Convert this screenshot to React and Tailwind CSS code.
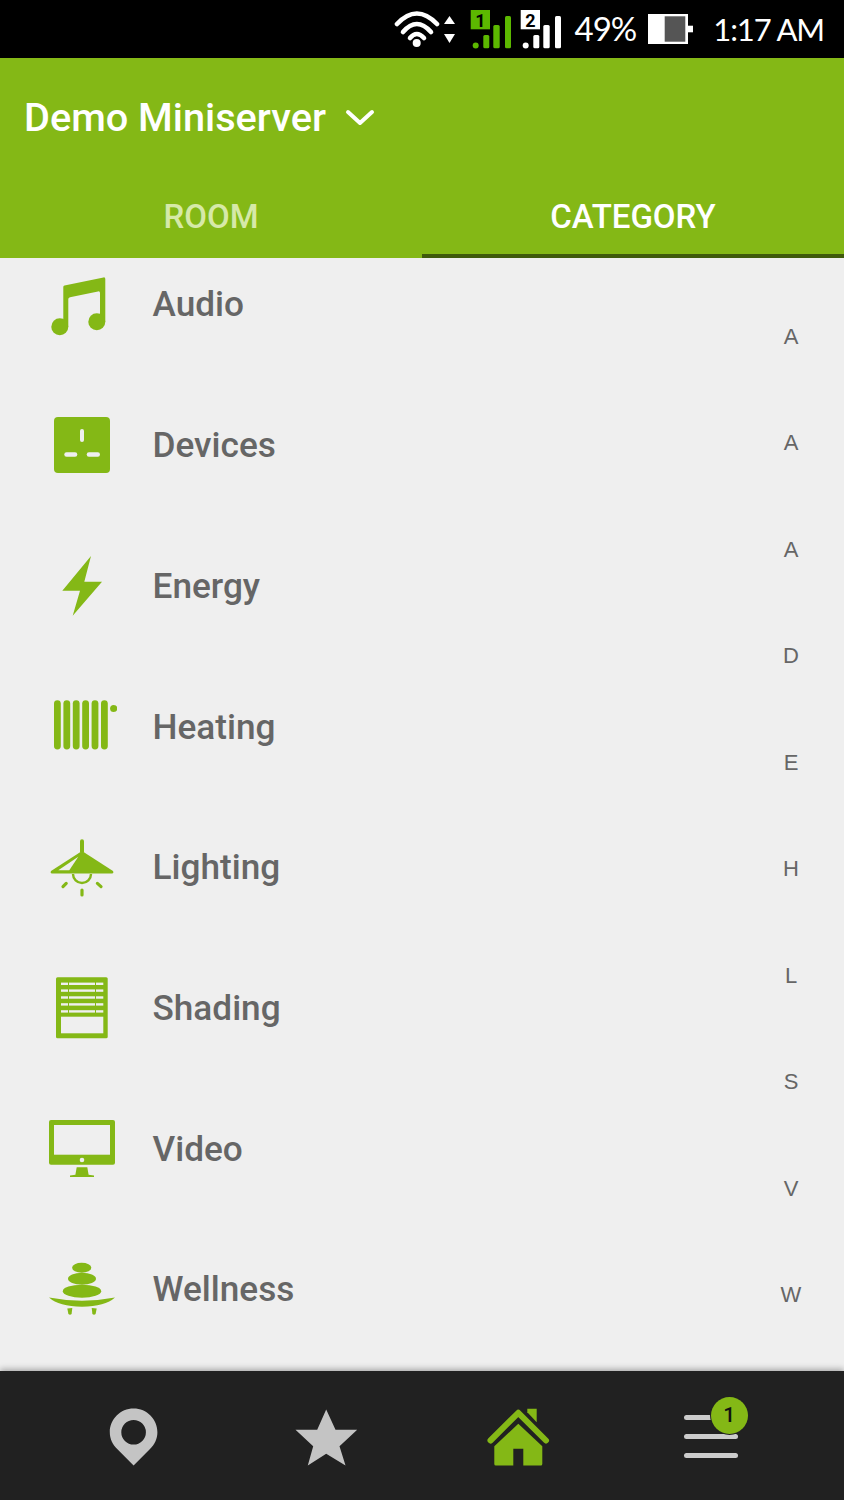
const categories = [
  { name: "Audio", icon: AudioIcon },
  { name: "Devices", icon: DevicesIcon },
  { name: "Energy", icon: EnergyIcon },
  { name: "Heating", icon: HeatingIcon },
  { name: "Lighting", icon: LightingIcon },
  { name: "Shading", icon: ShadingIcon },
  { name: "Video", icon: VideoIcon },
  { name: "Wellness", icon: WellnessIcon },
];

const letters = ["A", "A", "A", "D", "E", "H", "L", "S", "V", "W"];

function Icon({ children }) {
  return (
    <svg width="70" height="70" viewBox="0 0 70 70" fill="#84b816" className="shrink-0">
      {children}
    </svg>
  );
}

function AudioIcon() {
  return (
    <Icon>
      <path d="M16.3 18 Q16.3 16.8 17.5 16.5 L56.5 8.4 Q58.3 8.1 58.3 10 V52.7 H53 V24 Q53 22 51 22.4 L23 28.2 Q21.3 28.6 21.3 30 V57.7 H16.3 Z" />
      <circle cx="12.8" cy="57.7" r="8.5" />
      <circle cx="49.8" cy="52.7" r="8.5" />
    </Icon>
  );
}

function DevicesIcon() {
  return (
    <Icon>
      <rect x="7" y="7" width="56" height="56" rx="4" />
      <rect x="33" y="19" width="4" height="13" rx="2" fill="#efefef" />
      <rect x="17.3" y="42.3" width="13" height="4.4" rx="2.2" fill="#efefef" />
      <rect x="39.7" y="42.3" width="13.3" height="4.4" rx="2.2" fill="#efefef" />
    </Icon>
  );
}

function EnergyIcon() {
  return (
    <Icon>
      <polygon points="44,5 15.3,39.7 33,39.7 25.7,64.7 55,30.7 37.3,30.7" />
    </Icon>
  );
}

function HeatingIcon() {
  return (
    <Icon>
      {[7, 16.4, 25.8, 35.2, 44.6, 54].map((x) => (
        <rect key={x} x={x} y="9.2" width="6.8" height="49.3" rx="3.4" />
      ))}
      <circle cx="66.7" cy="17.5" r="3.6" />
    </Icon>
  );
}

function LightingIcon() {
  return (
    <Icon>
      <rect x="33" y="7.3" width="4" height="14" rx="2" />
      <path d="M35 19 L66 39 Q67 41.5 65 41.5 H5 Q3 41.5 4 39 Z" />
      <polygon points="31.3,24.7 11.3,38.3 22.3,38.3" fill="#efefef" />
      <path d="M26 42 A9 9 0 0 0 44 42" fill="none" stroke="#84b816" strokeWidth="2.4" />
      <g stroke="#84b816" strokeWidth="3.2" strokeLinecap="round">
        <line x1="35" y1="58" x2="35" y2="63" />
        <line x1="16" y1="54.6" x2="19.2" y2="51.4" />
        <line x1="54" y1="54.6" x2="50.4" y2="51.4" />
      </g>
    </Icon>
  );
}

function ShadingIcon() {
  return (
    <Icon>
      <rect x="9" y="4.3" width="51.7" height="61" rx="1.5" />
      <rect x="14" y="43.7" width="42.3" height="16.6" fill="#efefef" />
      {[9.6, 16.4, 23.3, 30.2, 37.2].map((y) => (
        <g key={y} fill="#efefef">
          <rect x="14" y={y} width="7" height="2.4" />
          <rect x="22" y={y} width="26" height="2.4" />
          <rect x="49" y={y} width="7.3" height="2.4" />
        </g>
      ))}
    </Icon>
  );
}

function VideoIcon() {
  return (
    <Icon>
      <rect x="2" y="7" width="66" height="44.7" rx="2" />
      <rect x="7" y="12" width="56" height="29.7" fill="#efefef" />
      <circle cx="35" cy="47" r="2.3" fill="#efefef" />
      <polygon points="29.7,54.3 40.3,54.3 41.6,61.8 47,62.6 47,64 23,64 23,62.6 28.4,61.8" />
    </Icon>
  );
}

function WellnessIcon() {
  return (
    <Icon>
      <ellipse cx="34.7" cy="13.7" rx="9.6" ry="5" />
      <ellipse cx="35" cy="24.7" rx="14" ry="6" />
      <ellipse cx="35" cy="37.2" rx="19.2" ry="6.5" />
      <path d="M2 43.6 Q35 50 68 43.6 Q58 52.7 35 52.7 Q12 52.7 2 43.6 Z" />
      <path d="M20.3 54.5 L25.3 54 L24.6 60 Q23 61.4 21.4 60 Z" />
      <path d="M44.7 54 L49.7 54.5 L48.6 60 Q47 61.4 45.4 60 Z" />
    </Icon>
  );
}

function StatusIcons() {
  const bars = (x, color) => (
    <g fill={color}>
      <circle cx={x + 5} cy="45.5" r="3" />
      <rect x={x + 12.6} y="35" width="6" height="13.3" rx="1.5" />
      <rect x={x + 22.6} y="25" width="6.4" height="23.3" rx="1.5" />
      <rect x={x + 34.3} y="16" width="6" height="32.3" rx="1.5" />
    </g>
  );

  return (
    <svg width="168" height="58" viewBox="394 0 168 58" className="shrink-0">
      <g fill="none" stroke="#fff" strokeWidth="4.6" strokeLinecap="round">
        <path d="M397 24 Q416.7 3 437 24" />
        <path d="M403 32 Q416.7 16 431 32" />
        <path d="M410 38 Q416.7 30 424 38" />
      </g>
      <circle cx="416.7" cy="43" r="4" fill="#fff" />
      <polygon points="449.5,16 455,24 444,24" fill="#fff" />
      <polygon points="449.5,43 455,34 444,34" fill="#fff" />
      <rect x="470.7" y="10" width="19.3" height="19.3" fill="#5cb800" />
      <text x="480.4" y="26.5" textAnchor="middle" fontFamily="Roboto" fontWeight="700" fontSize="18" fill="#000">1</text>
      {bars(470.7, "#5cb800")}
      <rect x="520.7" y="10" width="19.3" height="19.3" fill="#fff" />
      <text x="530.4" y="26.5" textAnchor="middle" fontFamily="Roboto" fontWeight="700" fontSize="18" fill="#000">2</text>
      {bars(520.7, "#fff")}
    </svg>
  );
}

function Battery() {
  return (
    <svg width="45" height="30" viewBox="0 0 45 30" className="shrink-0">
      <rect x="0" y="0" width="40" height="30" fill="#fff" />
      <rect x="16.7" y="2.3" width="20.6" height="25.4" fill="#555" />
      <rect x="40" y="11.7" width="5" height="6.6" fill="#fff" />
    </svg>
  );
}

function PinIcon() {
  return (
    <svg width="70" height="70" viewBox="0 0 70 70">
      <path
        fillRule="evenodd"
        fill="#c4c4c4"
        d="M35.6 7.4 C48.8 7.4 59.4 18 59.4 31.2 C59.4 38 56.6 43.4 52 48 L35.6 64.6 L19.2 48 C14.6 43.4 11.8 38 11.8 31.2 C11.8 18 22.4 7.4 35.6 7.4 Z M35.6 19 A12.3 12.3 0 1 0 35.6 43.6 A12.3 12.3 0 1 0 35.6 19 Z"
      />
    </svg>
  );
}

function StarIcon() {
  return (
    <svg width="70" height="70" viewBox="0 0 70 70">
      <polygon
        fill="#c4c4c4"
        points="35.2,8.5 44.5,28.8 66.2,28.8 48.5,45.2 54.5,64.5 35.2,52.8 16.8,64.5 22.2,45.2 4.5,28.8 26.2,28.8"
      />
    </svg>
  );
}

function HomeIcon() {
  return (
    <svg width="70" height="70" viewBox="0 0 70 70" fill="#84b816">
      <path d="M7.5 39.5 L35.3 11.8 L63 39.5" fill="none" stroke="#84b816" strokeWidth="6" strokeLinecap="round" strokeLinejoin="round" />
      <polygon points="44.3,7.8 53.7,7.8 53.7,21.2 44.3,11.2" />
      <path
        fillRule="evenodd"
        d="M35.3 22.8 L59.3 45.2 V63 Q59.3 64.5 57.8 64.5 H40.3 V47.8 H30.3 V64.5 H12.8 Q11.3 64.5 11.3 63 V45.2 Z"
      />
    </svg>
  );
}

function App() {
  return (
    <div className="flex h-[1500px] flex-col overflow-hidden bg-[#efefef] font-['Roboto',sans-serif]">
      <div className="flex h-[58px] shrink-0 items-center justify-end bg-black pr-[20px] text-white">
        <StatusIcons />
        <span className="ml-[13px] font-['Lato',sans-serif] text-[33px] tracking-[-1px]">49%</span>
        <div className="ml-[12px]">
          <Battery />
        </div>
        <span className="ml-[20px] font-['Lato',sans-serif] text-[31px] tracking-[-1.1px]">1:17 AM</span>
      </div>

      <header className="flex h-[200px] shrink-0 flex-col bg-[#84b816]">
        <div className="flex h-[118px] items-center pl-[24px] text-white">
          <h1 className="pt-[1px] text-[39.7px] font-medium leading-none">Demo Miniserver</h1>
          <svg width="30" height="20" viewBox="0 0 30 20" className="ml-[19px] mt-[2px]">
            <path d="M3 4 L15 15 L27 4" fill="none" stroke="#fff" strokeWidth="4" strokeLinecap="round" strokeLinejoin="round" />
          </svg>
        </div>
        <div className="grid flex-1 grid-cols-2 text-[33px] font-medium">
          <div className="flex items-center justify-center border-b-4 border-transparent pt-[3px] text-[#d6e9a8]">ROOM</div>
          <div className="flex items-center justify-center border-b-4 border-[#3f5a0b] pt-[3px] text-white">
            CATEGORY
          </div>
        </div>
      </header>

      <main className="relative flex-1 overflow-hidden">
        <ul className="-mt-[24px]">
          {categories.map(({ name, icon: CategoryIcon }) => (
            <li key={name} className="flex h-[140.7px] items-center">
              <div className="ml-[47px] mr-[35.5px] flex">
                <CategoryIcon />
              </div>
              <span className="pt-[1px] text-[35.2px] font-medium text-[#666666]">{name}</span>
            </li>
          ))}
        </ul>

        <div className="absolute right-0 top-[25px] w-[106px] text-center font-['Liberation_Sans',sans-serif] text-[22px] text-[#666666]">
          {letters.map((letter, i) => (
            <div key={i} className="flex h-[106.5px] items-center justify-center">
              {letter}
            </div>
          ))}
        </div>
      </main>

      <nav className="relative grid h-[129px] shrink-0 grid-cols-4 items-center bg-[#212121] px-[37px] shadow-[0_-2px_6px_rgba(0,0,0,0.3)]">
        <div className="flex justify-center"><PinIcon /></div>
        <div className="flex justify-center"><StarIcon /></div>
        <div className="flex justify-center"><HomeIcon /></div>
        <div className="flex justify-center">
          <div className="relative mt-[2px] flex w-[54px] flex-col gap-[14px]">
            <div className="h-[5px] rounded-full bg-[#cccccc]" />
            <div className="h-[5px] rounded-full bg-[#cccccc]" />
            <div className="h-[5px] rounded-full bg-[#cccccc]" />
            <div className="absolute -right-[10px] -top-[18px] flex h-[37px] w-[37px] items-center justify-center rounded-full bg-[#84b816] text-[21px] font-medium text-[#111111] ring-1 ring-[#212121]">
              1
            </div>
          </div>
        </div>
      </nav>
    </div>
  );
}

export default App;
